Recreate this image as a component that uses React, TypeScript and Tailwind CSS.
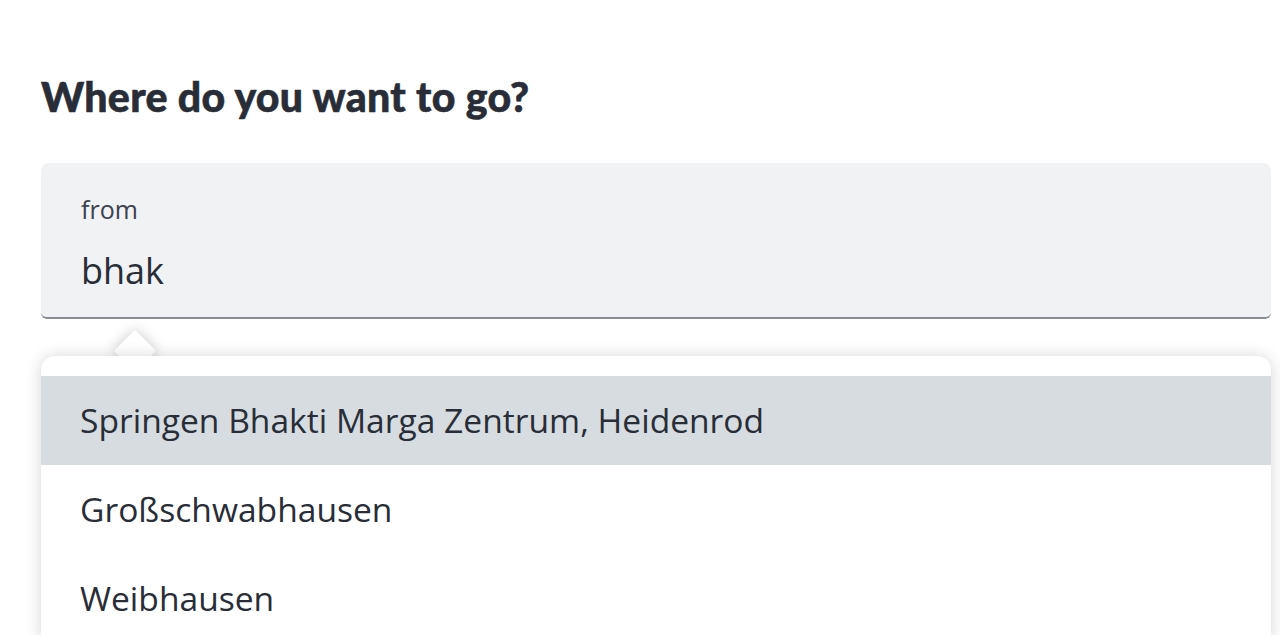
export default function App() {
  const options = [
    "Springen Bhakti Marga Zentrum, Heidenrod",
    "Großschwabhausen",
    "Weibhausen",
  ];

  return (
    <div className="h-[635px] w-[1280px] overflow-hidden bg-white font-['Open_Sans',sans-serif] text-[#282d37]">
      <div className="pl-[41px] pr-[9px] pt-[72px]">
        <h1 className="font-['Lato',sans-serif] text-[41px] font-black leading-[50px] tracking-[0.3px] text-[#282d37] [-webkit-text-stroke:0.6px_#282d37]">
          Where do you want to go?
        </h1>

        {/* input field */}
        <div className="mt-[41px] h-[156px] rounded-t-[8px] rounded-b-[6px] border-b-2 border-[#878c96] bg-[#f0f2f4] px-[40px] pt-[28px]">
          <div className="text-[25px] leading-[36px] text-[#3c414b]">from</div>
          <div className="mt-[20px] text-[36px] leading-[48px]">bhak</div>
        </div>

        {/* suggestions */}
        <div className="relative mt-[37px]">
          <div className="absolute left-[79px] top-[-20px] h-[30px] w-[30px] rotate-45 rounded-[2px] bg-white shadow-[0_0_14px_rgba(0,0,0,0.22)]" />
          <div className="relative overflow-hidden rounded-t-[14px] bg-white pt-[20px] shadow-[0_0_16px_rgba(0,0,0,0.16)]">
            {options.map((o, i) => (
              <div
                key={o}
                className={
                  "flex h-[89px] items-center px-[39px] text-[33.6px] " +
                  (i === 0 ? "bg-[#d7dce1]" : "bg-white")
                }
              >
                {o}
              </div>
            ))}
          </div>
          <div className="absolute left-[70px] top-[0px] h-[18px] w-[48px] bg-white" />
        </div>
      </div>
    </div>
  );
}
